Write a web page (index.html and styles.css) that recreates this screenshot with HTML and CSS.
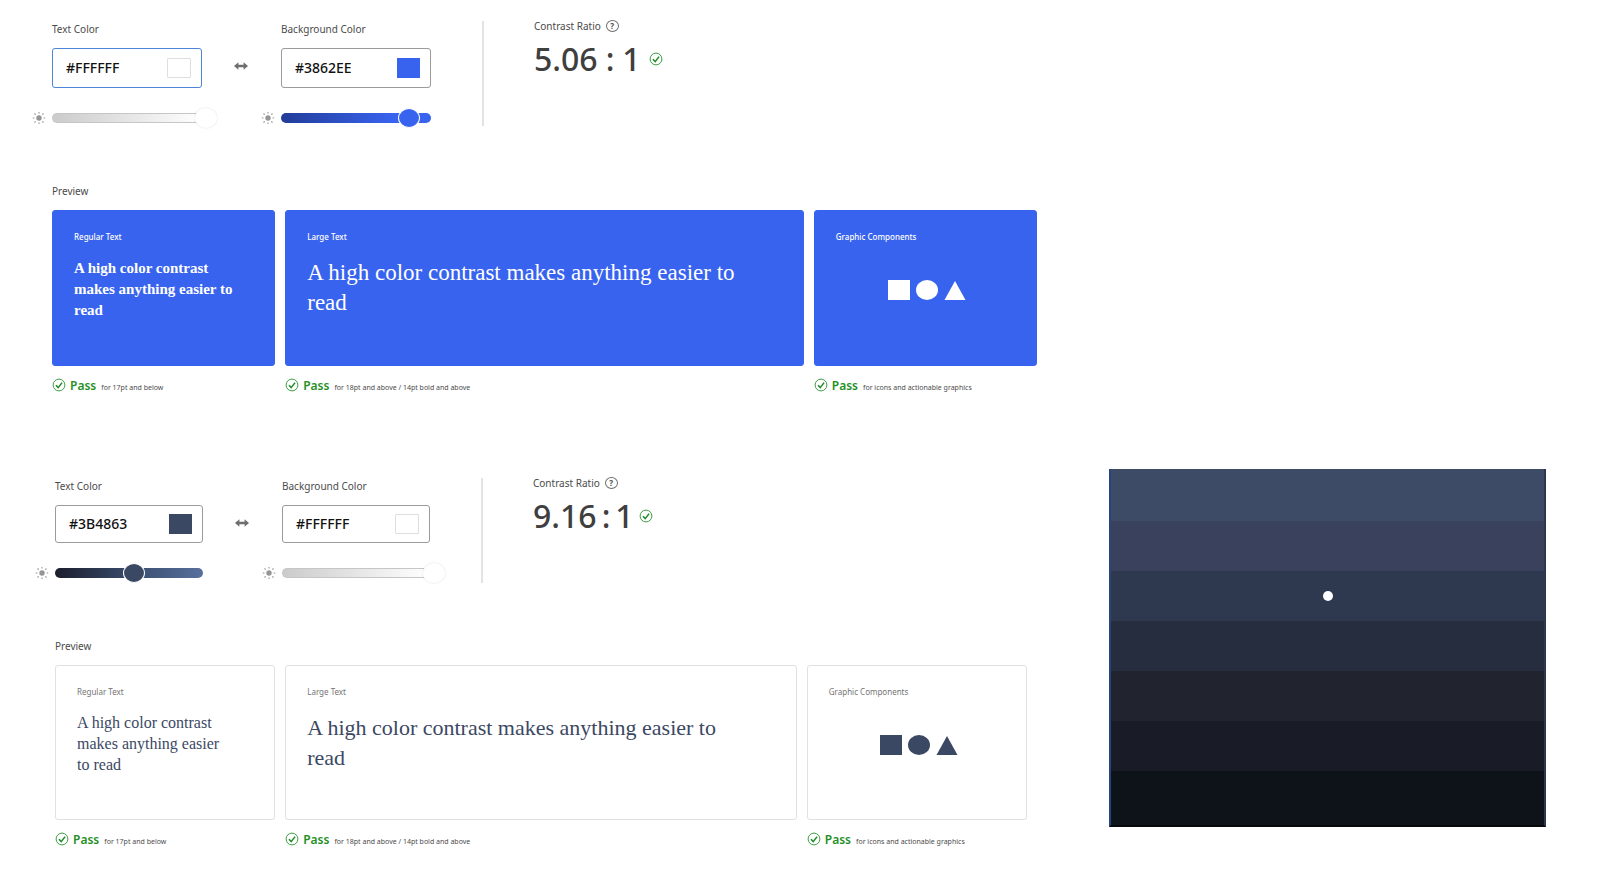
FILE: index.html
```html
<!DOCTYPE html>
<html lang="en">
<head>
    <meta charset="UTF-8">
    <meta name="viewport" content="width=device-width, initial-scale=1.0">
    <title>Contrast Checker</title>
    <link rel="stylesheet" href="styles.css">
</head>
<body>
    <!-- Shared icons -->
    <svg class="icon-defs" aria-hidden="true">
        <symbol id="sun" viewBox="0 0 14 14">
            <circle cx="7" cy="7" r="2.7" fill="#959595"/>
            <path d="M7 1v1.6M7 11.4V13M.8 7h1.6M11.6 7h1.6M2.5 2.5l1.2 1.2M10.3 10.3l1.2 1.2M2.5 11.5l1.2-1.2M10.3 3.7l1.2-1.2" stroke="#959595" stroke-width="1.1"/>
        </symbol>
        <symbol id="swap" viewBox="0 0 14 10">
            <path d="M0 5l4.4-3.8v2.6h5.2V1.2L14 5 9.6 8.8V6.2H4.4v2.6z" fill="#6e6e6e"/>
        </symbol>
        <symbol id="check" viewBox="0 0 14 14">
            <circle cx="7" cy="7" r="5.9" fill="none" stroke="#3f9f45" stroke-width="1"/>
            <path d="M4 7.3l2.2 2.3 3.9-5" fill="none" stroke="#1d8a24" stroke-width="1.5"/>
        </symbol>
    </svg>

    <main class="layout">
        <!-- White on blue -->
        <section class="checker checker-blue">
            <div class="controls">
                <div class="field">
                    <label class="label" for="text1">Text Color</label>
                    <div class="color-box focused">
                        <input type="text" id="text1" value="#FFFFFF">
                        <button class="swatch white" aria-label="Pick text color"></button>
                    </div>
                    <svg class="sun"><use href="#sun"/></svg>
                    <div class="slider light">
                        <span class="track"></span>
                        <input type="range" value="100" aria-label="Text color brightness">
                    </div>
                </div>
                <button class="swap" aria-label="Swap colors"><svg><use href="#swap"/></svg></button>
                <div class="field">
                    <label class="label" for="bg1">Background Color</label>
                    <div class="color-box">
                        <input type="text" id="bg1" value="#3862EE">
                        <button class="swatch blue" aria-label="Pick background color"></button>
                    </div>
                    <svg class="sun"><use href="#sun"/></svg>
                    <div class="slider blue">
                        <span class="track"></span>
                        <input type="range" value="82" aria-label="Background color brightness">
                    </div>
                </div>
                <div class="ratio">
                    <div class="ratio-label">Contrast Ratio <button class="help" aria-label="Help">?</button></div>
                    <div class="ratio-value">
                        <span>5.06</span><span>:</span><span>1</span>
                        <svg class="check"><use href="#check"/></svg>
                    </div>
                </div>
            </div>

            <div class="preview">
                <h2 class="label">Preview</h2>
                <div class="cards">
                    <div>
                        <div class="card">
                            <h3>Regular Text</h3>
                            <p class="regular">A high color contrast makes anything easier to read</p>
                        </div>
                        <div class="result"><svg class="check"><use href="#check"/></svg><strong>Pass</strong><small>for 17pt and below</small></div>
                    </div>
                    <div>
                        <div class="card">
                            <h3>Large Text</h3>
                            <p class="large">A high color contrast makes anything easier to read</p>
                        </div>
                        <div class="result"><svg class="check"><use href="#check"/></svg><strong>Pass</strong><small>for 18pt and above / 14pt bold and above</small></div>
                    </div>
                    <div>
                        <div class="card">
                            <h3>Graphic Components</h3>
                            <svg class="shapes" viewBox="0 0 78 20">
                                <rect width="22" height="20"/>
                                <ellipse cx="39" cy="10" rx="11" ry="10"/>
                                <path d="M67 1l10.5 19h-21z"/>
                            </svg>
                        </div>
                        <div class="result"><svg class="check"><use href="#check"/></svg><strong>Pass</strong><small>for icons and actionable graphics</small></div>
                    </div>
                </div>
            </div>
        </section>

        <!-- Navy on white -->
        <section class="checker checker-navy">
            <div class="controls">
                <div class="field">
                    <label class="label" for="text2">Text Color</label>
                    <div class="color-box">
                        <input type="text" id="text2" value="#3B4863">
                        <button class="swatch navy" aria-label="Pick text color"></button>
                    </div>
                    <svg class="sun"><use href="#sun"/></svg>
                    <div class="slider navy">
                        <span class="track"></span>
                        <input type="range" value="48" aria-label="Text color brightness">
                    </div>
                </div>
                <button class="swap" aria-label="Swap colors"><svg><use href="#swap"/></svg></button>
                <div class="field">
                    <label class="label" for="bg2">Background Color</label>
                    <div class="color-box">
                        <input type="text" id="bg2" value="#FFFFFF">
                        <button class="swatch white" aria-label="Pick background color"></button>
                    </div>
                    <svg class="sun"><use href="#sun"/></svg>
                    <div class="slider light">
                        <span class="track"></span>
                        <input type="range" value="100" aria-label="Background color brightness">
                    </div>
                </div>
                <div class="ratio">
                    <div class="ratio-label">Contrast Ratio <button class="help" aria-label="Help">?</button></div>
                    <div class="ratio-value">
                        <span>9.16</span><span>:</span><span>1</span>
                        <svg class="check"><use href="#check"/></svg>
                    </div>
                </div>
            </div>

            <div class="preview">
                <h2 class="label">Preview</h2>
                <div class="cards">
                    <div>
                        <div class="card">
                            <h3>Regular Text</h3>
                            <p class="regular">A high color contrast makes anything easier to read</p>
                        </div>
                        <div class="result"><svg class="check"><use href="#check"/></svg><strong>Pass</strong><small>for 17pt and below</small></div>
                    </div>
                    <div>
                        <div class="card">
                            <h3>Large Text</h3>
                            <p class="large">A high color contrast makes anything easier to read</p>
                        </div>
                        <div class="result"><svg class="check"><use href="#check"/></svg><strong>Pass</strong><small>for 18pt and above / 14pt bold and above</small></div>
                    </div>
                    <div>
                        <div class="card">
                            <h3>Graphic Components</h3>
                            <svg class="shapes" viewBox="0 0 78 20">
                                <rect width="22" height="20"/>
                                <ellipse cx="39" cy="10" rx="11" ry="10"/>
                                <path d="M67 1l10.5 19h-21z"/>
                            </svg>
                        </div>
                        <div class="result"><svg class="check"><use href="#check"/></svg><strong>Pass</strong><small>for icons and actionable graphics</small></div>
                    </div>
                </div>
            </div>
        </section>

        <!-- Shades from light to dark -->
        <div class="palette">
            <div class="shade shade-1"></div>
            <div class="shade shade-2"></div>
            <div class="shade shade-3"><span class="dot"></span></div>
            <div class="shade shade-4"></div>
            <div class="shade shade-5"></div>
            <div class="shade shade-6"></div>
            <div class="shade shade-7"></div>
        </div>
    </main>
</body>
</html>
```
FILE: styles.css
```css
* {
    box-sizing: border-box;
}

body {
    margin: 0;
    background-color: #fff;
    color: #4b4b4b;
    font-family: "Noto Sans", "Open Sans", sans-serif;
}

h2, h3, p {
    margin: 0;
    font-weight: normal;
}

button {
    padding: 0;
    border: none;
    background: none;
    font-family: inherit;
    cursor: pointer;
}

svg {
    display: block;
}

.icon-defs {
    position: absolute;
    width: 0;
    height: 0;
}

.layout {
    display: grid;
    grid-template-columns: minmax(0, 1037fr) minmax(0, 437fr);
    column-gap: 72px;
    padding-right: 71px;
}

.checker {
    grid-column: 1;
}

.checker-blue {
    --field-width: 150px;
    --box-height: 40px;
    --card-height: 156px;
    --card-bg: #3863ee;
    --card-border: #3863ee;
    --card-text: #fff;
    --card-label: #fff;
    padding: 18px 0 74px 32px;
}

.checker-navy {
    --field-width: 148px;
    --box-height: 38px;
    --card-height: 155px;
    --card-bg: #fff;
    --card-border: #e1e1e1;
    --card-text: #3b4863;
    --card-label: #747474;
    padding: 6px 10px 0 35px;
}

/* Controls */
.controls {
    display: flex;
    align-items: flex-start;
}

.field {
    display: grid;
    grid-template-columns: 14px var(--field-width);
    column-gap: 6px;
    padding-top: 3px;
}

.label {
    font-size: 10px;
    line-height: 16px;
}

.field .label {
    grid-column: 2;
    margin-bottom: 11px;
}

.color-box {
    grid-column: 2;
    display: flex;
    align-items: center;
    justify-content: space-between;
    height: var(--box-height);
    padding: 0 10px 0 13px;
    border: 1px solid #9b9b9b;
    border-radius: 3px;
    margin-bottom: 20px;
}

.color-box.focused {
    border-color: #4b86d8;
}

.color-box input {
    width: 80px;
    padding: 0 0 1px;
    border: none;
    outline: none;
    background: none;
    color: #111;
    font-family: inherit;
    font-size: 14px;
    font-weight: 500;
}

.swatch {
    width: 23px;
    height: 20px;
}

.swatch.white {
    width: 24px;
    border: 1px solid #dedede;
    border-radius: 1px;
}

.swatch.blue {
    background-color: #3863ee;
}

.swatch.navy {
    background-color: #3b4863;
}

.sun {
    width: 14px;
    height: 14px;
    align-self: center;
}

.swap {
    margin: 43px 13px 0 32px;
}

.swap svg {
    width: 14px;
    height: 10px;
}

/* Slider */
.slider {
    display: grid;
    align-items: center;
    height: 20px;
}

.track,
.slider input {
    grid-area: 1 / 1;
}

.track {
    height: 10px;
    border-radius: 5px;
}

.slider input {
    appearance: none;
    width: calc(100% + 15px);
    height: 20px;
    margin: 0;
    background: none;
}

.slider input::-webkit-slider-thumb {
    appearance: none;
    width: 22px;
    height: 20px;
    border: 1px solid #fff;
    border-radius: 50%;
    background-color: #fff;
}

.slider.light .track {
    border: 1px solid #c6c6c6;
    border-right-color: #eee;
    background: linear-gradient(to right, #cbcbcb, #fff);
}

.slider.light input::-webkit-slider-thumb {
    box-shadow: 0 0 2px rgba(0, 0, 0, 0.15);
}

.slider.blue .track {
    background: linear-gradient(to right, #213c98, #3863ee 75%);
}

.slider.blue input::-webkit-slider-thumb {
    background-color: #3863ee;
}

.slider.navy .track {
    background: linear-gradient(to right, #1b1e2c, #3b4f70 55%, #57709d);
}

.slider.navy input::-webkit-slider-thumb {
    background-color: #3b4863;
}

/* Contrast ratio */
.ratio {
    position: relative;
    margin-left: 51px;
    padding-left: 52px;
}

.ratio::before {
    content: "";
    position: absolute;
    left: 0;
    top: 3px;
    width: 2px;
    height: 105px;
    background-color: #e3e3e3;
}

.ratio-label {
    display: flex;
    align-items: center;
    gap: 5px;
    height: 16px;
    font-size: 10px;
}

.help {
    width: 13px;
    height: 12px;
    border: 1px solid #6e6e6e;
    border-radius: 50%;
    color: #4b4b4b;
    font-size: 8px;
    font-weight: bold;
    line-height: 10px;
}

.ratio-value {
    display: flex;
    align-items: center;
    gap: 8px;
    height: 50px;
    color: #3f3f3f;
    font-size: 32px;
    font-weight: 500;
    line-height: 46px;
}

.checker-navy .ratio-value {
    gap: 5px;
}

.check {
    width: 14px;
    height: 14px;
}

/* Preview */
.preview {
    margin: 55px 0 0 20px;
}

.preview .label {
    margin-bottom: 11px;
}

.cards {
    display: grid;
    grid-template-columns: 223fr 518fr 223fr;
    gap: 10px;
}

.card {
    height: var(--card-height);
    padding: 19px 21px;
    border: 1px solid var(--card-border);
    border-radius: 3px;
    background-color: var(--card-bg);
    color: var(--card-text);
}

.card h3 {
    color: var(--card-label);
    font-size: 8px;
    line-height: 14px;
}

.checker-blue .card h3 {
    font-weight: 500;
}

.regular {
    margin-top: 13px;
    font-family: "Liberation Serif", serif;
    font-size: 16px;
    line-height: 21px;
}

.checker-blue .regular {
    margin-top: 14px;
    padding-right: 16px;
    font-size: 15px;
    font-weight: bold;
}

.checker-navy .regular {
    padding-right: 30px;
}

.large {
    margin-top: 14px;
    padding-right: 30px;
    font-family: "Liberation Serif", serif;
    font-size: 23px;
    line-height: 30px;
}

.checker-navy .large {
    font-size: 22px;
}

.shapes {
    width: 82px;
    height: 20px;
    margin: 36px auto 0;
    padding-left: 4px;
    fill: var(--card-text);
}

.result {
    display: flex;
    align-items: center;
    height: 20px;
    margin-top: 9px;
}

.result strong {
    margin: 0 5px 0 4px;
    color: #1f8f26;
    font-size: 12px;
    font-weight: 600;
}

.result small {
    padding-top: 4px;
    font-size: 7px;
}

/* Palette */
.palette {
    grid-column: 2;
    grid-row: 2;
    align-self: start;
    border-left: 2px solid #27457c;
    border-right: 2px solid #2b3850;
    border-bottom: 2px solid #07090b;
}

.shade {
    display: flex;
    align-items: center;
    justify-content: center;
    height: 50px;
}

.shade-1 {
    height: 52px;
    background-color: #3e4b67;
}

.shade-2 {
    background-color: #39415d;
}

.shade-3 {
    background-color: #2e384f;
}

.shade-4 {
    background-color: #252d3f;
}

.shade-5 {
    background-color: #21242f;
}

.shade-6 {
    background-color: #191b26;
}

.shade-7 {
    height: 54px;
    background-color: #0e1319;
}

.dot {
    width: 10px;
    height: 10px;
    border-radius: 50%;
    background-color: #fff;
}
```
